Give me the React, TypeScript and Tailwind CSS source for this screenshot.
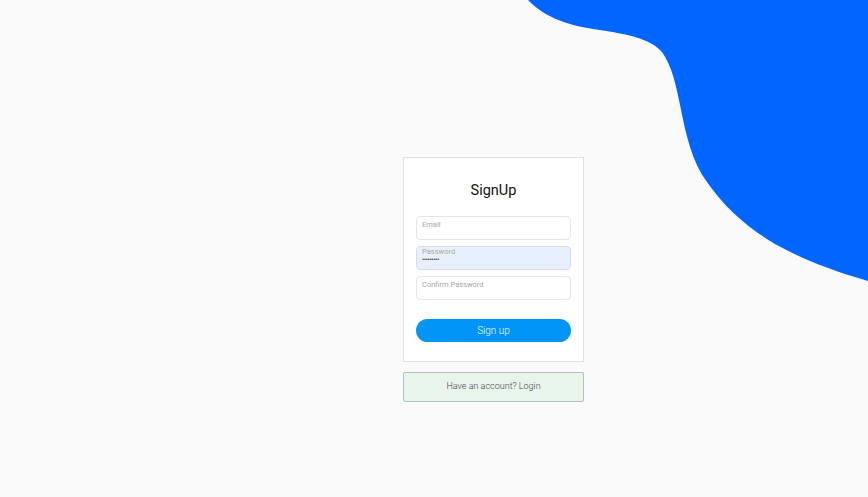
import React from "react";

function Blob() {
    return (
        <svg
            className="absolute top-0 left-0 pointer-events-none"
            width="868"
            height="497"
            viewBox="0 0 868 497"
        >
            <path
                d="M528 0 C545 18 570 26 600 30 C625 34 650 38 662 52 C672 66 676 85 680 105 C686 135 692 162 707 182 C725 208 748 228 775 244 C800 258 830 270 868 281 L868 0 Z"
                fill="#0066ff"
            />
        </svg>
    );
}

function Field({ label, value, filled }: { label: string; value?: string; filled?: boolean }) {
    return (
        <div
            className={`h-[24px] rounded-[4px] border px-[5px] ${
                filled ? "bg-[#e8f0fe] border-[#d5dced] pt-0" : "bg-white border-[#e6e6e6] pt-[3px]"
            }`}
        >
            <div className="text-[7.5px] leading-[10px] text-[#a6a6a6]">{label}</div>
            {value && <div className="text-[7px] leading-[6px] text-[#444] tracking-[-0.5px]">{value}</div>}
        </div>
    );
}

export default function App() {
    return (
        <main
            className="relative h-[497px] w-full overflow-hidden bg-[#fafafa]"
            style={{ fontFamily: "Roboto, 'Liberation Sans', sans-serif" }}
        >
            <Blob />
            <div className="relative pl-[403px] pt-[157px] w-[584px]">
                <div className="bg-white border border-[#e1e1e1] px-[12px] pt-[24px] pb-[19px]">
                    <h1 className="text-center text-[14.5px] leading-[18px] text-[#111]">SignUp</h1>
                    <div className="mt-[16px] flex flex-col gap-[6px]">
                        <Field label="Email" />
                        <Field label="Password" value="•••••••••" filled />
                        <Field label="Confirm Password" />
                    </div>
                    <button className="mt-[19px] w-full h-[23px] rounded-full bg-[#0095f6] text-white text-[10px] font-light">
                        Sign up
                    </button>
                </div>
                <div className="mt-[10px] h-[30px] flex items-center justify-center bg-[#e8f5ed] border border-[#b7bfba] rounded-[2px] text-[9px] font-light text-[#444]">
                    Have an account? Login
                </div>
            </div>
        </main>
    );
}
